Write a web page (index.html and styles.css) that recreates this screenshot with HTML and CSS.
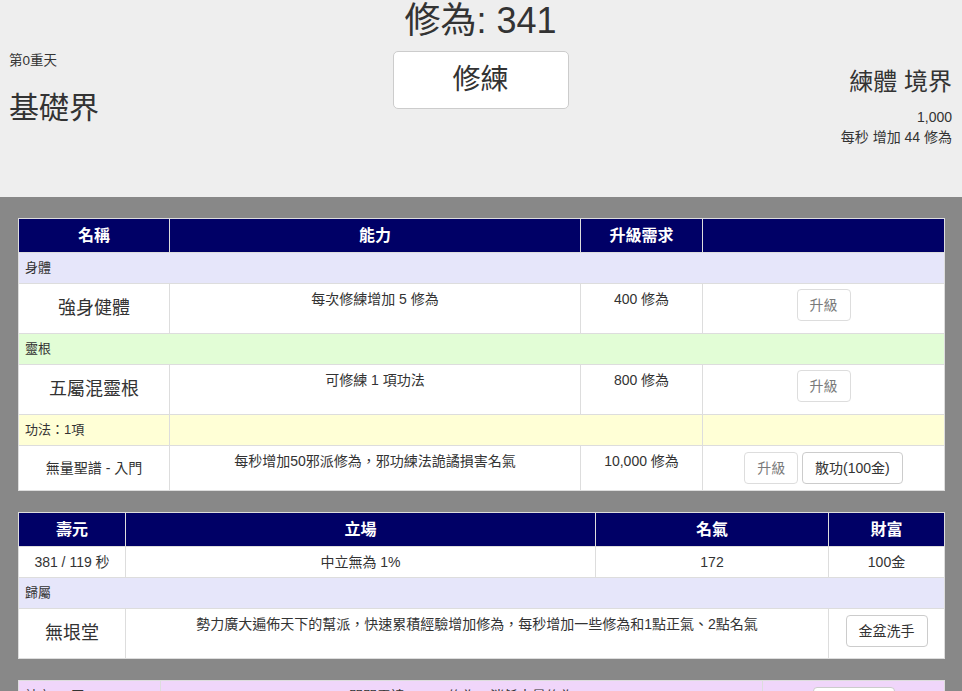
FILE: index.html
```html
<!DOCTYPE html>
<html lang="zh-Hant">
<head>
<meta charset="utf-8">
<title>修仙</title>
<link rel="stylesheet" href="styles.css">
</head>
<body>
<header class="top">
  <div class="realm">
    <div class="heaven">第0重天</div>
    <h2 class="realm-name">基礎界</h2>
  </div>
  <div class="center">
    <h1 class="cultivation">修為: 341</h1>
    <button class="btn btn-train">修練</button>
  </div>
  <div class="state">
    <h3 class="state-title">練體 境界</h3>
    <div>1,000</div>
    <div>每秒 增加 44 修為</div>
  </div>
</header>

<main class="main">
  <table class="grid">
    <colgroup>
      <col class="c1-name"><col class="c1-ability"><col class="c1-req"><col class="c1-act">
    </colgroup>
    <thead>
      <tr><th>名稱</th><th>能力</th><th>升級需求</th><th></th></tr>
    </thead>
    <tbody>
      <tr class="section lavender"><td colspan="4">身體</td></tr>
      <tr>
        <td class="name">強身健體</td>
        <td>每次修練增加 5 修為</td>
        <td>400 修為</td>
        <td><button class="btn" disabled>升級</button></td>
      </tr>
      <tr class="section green"><td colspan="4">靈根</td></tr>
      <tr>
        <td class="name">五屬混靈根</td>
        <td>可修練 1 項功法</td>
        <td>800 修為</td>
        <td><button class="btn" disabled>升級</button></td>
      </tr>
      <tr class="section yellow"><td>功法：1項</td><td colspan="2"></td><td></td></tr>
      <tr>
        <td class="name small">無量聖譜 - 入門</td>
        <td>每秒增加50邪派修為，邪功練法詭譎損害名氣</td>
        <td>10,000 修為</td>
        <td class="tight"><button class="btn" disabled>升級</button> <button class="btn">散功(100金)</button></td>
      </tr>
    </tbody>
  </table>

  <table class="grid">
    <colgroup>
      <col class="c2-life"><col class="c2-stance"><col class="c2-fame"><col class="c2-wealth">
    </colgroup>
    <thead>
      <tr><th>壽元</th><th>立場</th><th>名氣</th><th>財富</th></tr>
    </thead>
    <tbody>
      <tr class="stats">
        <td>381 / 119 秒</td>
        <td>中立無為 1%</td>
        <td>172</td>
        <td>100金</td>
      </tr>
      <tr class="section lavender"><td colspan="4">歸屬</td></tr>
      <tr>
        <td class="name">無垠堂</td>
        <td colspan="2">勢力廣大遍佈天下的幫派，快速累積經驗增加修為，每秒增加一些修為和1點正氣、2點名氣</td>
        <td class="tight"><button class="btn">金盆洗手</button></td>
      </tr>
    </tbody>
  </table>

  <table class="grid">
    <colgroup>
      <col class="c3-a"><col class="c3-b"><col class="c3-c">
    </colgroup>
    <tbody>
      <tr class="section purple">
        <td>社交：0回</td>
        <td class="center-text">閉關需達 2,000 修為，消耗大量修為</td>
        <td class="tight"><button class="btn">閉關修練</button></td>
      </tr>
      <tr>
        <td class="name">閉關</td>
        <td>閉關期間無法進行其他修練</td>
        <td></td>
      </tr>
    </tbody>
  </table>
</main>
</body>
</html>
```

FILE: styles.css
```css
html, body {
  margin: 0;
  padding: 0;
}

body {
  font-family: "Liberation Sans", "Noto Sans CJK TC", sans-serif;
  font-size: 14px;
  line-height: 20px;
  color: #333;
  background: #888;
}

.top {
  display: grid;
  grid-template-columns: 1fr auto 1fr;
  height: 197px;
  box-sizing: border-box;
  padding: 0 10px 0 9px;
  background: #eee;
}

.realm {
  padding-top: 51px;
}

.heaven {
  font-size: 13.5px;
  line-height: 20px;
}

.realm-name {
  margin: 20px 0 0;
  font-size: 30px;
  line-height: 33px;
  font-weight: normal;
}

.center {
  display: flex;
  flex-direction: column;
  align-items: center;
}

.cultivation {
  margin: 0;
  font-size: 36px;
  line-height: 41px;
  font-weight: normal;
}

.state {
  text-align: right;
  padding-top: 69px;
}

.state-title {
  margin: 0 0 12px;
  font-size: 24px;
  line-height: 26px;
  font-weight: normal;
}

.btn {
  display: inline-block;
  box-sizing: border-box;
  margin: 0;
  padding: 5px 12px;
  font-family: inherit;
  font-size: 14px;
  line-height: 20px;
  color: #333;
  background: #fff;
  border: 1px solid #ccc;
  border-radius: 4px;
  cursor: pointer;
  vertical-align: middle;
}

.btn:disabled {
  opacity: 0.65;
  cursor: not-allowed;
}

.btn-train {
  margin-top: 10px;
  width: 176px;
  height: 58px;
  padding: 0;
  font-size: 28px;
  line-height: 56px;
  border-radius: 5px;
}

.main {
  display: flex;
  flex-direction: column;
  gap: 21px;
  padding: 21px 18px;
}

.grid {
  width: 100%;
  border-collapse: collapse;
  table-layout: fixed;
  background: #fff;
}

.c1-name { width: 151px; }
.c1-ability { width: 411px; }
.c1-req { width: 122px; }
.c1-act { width: 242px; }

.c2-life { width: 107px; }
.c2-stance { width: 470px; }
.c2-fame { width: 233px; }
.c2-wealth { width: 116px; }

.c3-a { width: 142px; }
.c3-b { width: 602px; }
.c3-c { width: 182px; }

.grid th {
  padding: 6px 8px;
  font-size: 16px;
  line-height: 21px;
  font-weight: bold;
  color: #fff;
  background: #006;
  border: 1px solid #ddd;
  text-align: center;
}

.grid td {
  padding: 5px 8px;
  border: 1px solid #ddd;
  vertical-align: top;
  text-align: center;
}

.grid td.tight {
  padding-top: 6px;
  padding-bottom: 6px;
}

.grid td.name {
  padding: 12px 8px;
  font-size: 18px;
  line-height: 25px;
  vertical-align: middle;
}

.grid td.name.small {
  font-size: 14px;
  line-height: 20px;
}

.stats td {
  vertical-align: middle;
}

.section td {
  padding: 5px 6px;
  font-size: 13px;
  line-height: 20px;
  text-align: left;
}

.section td.center-text,
.section td.tight {
  text-align: center;
  font-size: 14px;
}

.lavender td { background: #e6e6fa; }
.green td { background: #e2fdd6; }
.yellow td { background: #ffffd6; }
.purple td { background: #f0d6fa; }
```
